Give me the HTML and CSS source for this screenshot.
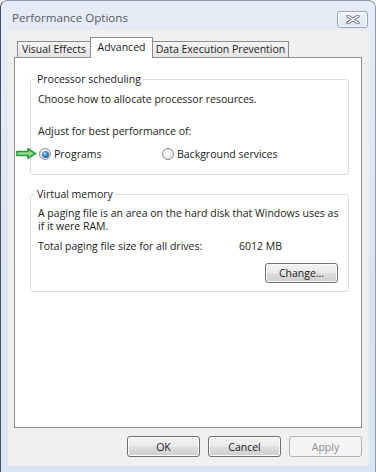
FILE: index.html
```html
<!DOCTYPE html>
<html>
<head>
<meta charset="utf-8">
<link rel="stylesheet" href="styles.css">
</head>
<body>
<div class="window">
  <div class="titlebar">
    <span class="title">Performance Options</span>
    <div class="close">
      <svg width="14" height="9" viewBox="0 0 14 9">
        <path d="M2 1.2 L12 7.8 M12 1.2 L2 7.8" stroke="#5a6473" stroke-width="3.2" stroke-linecap="round" fill="none"/>
        <path d="M2 1.2 L12 7.8 M12 1.2 L2 7.8" stroke="#ffffff" stroke-width="1.6" stroke-linecap="round" fill="none"/>
      </svg>
    </div>
  </div>
  <div class="client">
    <div class="tabs">
      <div class="tab tab-first">Visual Effects</div>
      <div class="tab tab-active">Advanced</div>
      <div class="tab tab-last">Data Execution Prevention</div>
    </div>
    <div class="panel">
      <fieldset class="group group-proc">
        <legend>Processor scheduling</legend>
        <p class="choose">Choose how to allocate processor resources.</p>
        <p class="adjust">Adjust for best performance of:</p>
        <div class="radio-row">
          <svg class="arrow" width="21" height="11" viewBox="0 0 21 11">
            <path d="M1 3.5 H12 V0.8 L19.5 5.5 L12 10.2 V7.5 H1 Z" fill="#8fdc8a" stroke="#1f9e3c" stroke-width="1.6" stroke-linejoin="miter"/>
          </svg>
          <label class="opt opt-first"><span class="radio checked"></span>Programs</label>
          <label class="opt"><span class="radio"></span>Background services</label>
        </div>
      </fieldset>
      <fieldset class="group group-vm">
        <legend>Virtual memory</legend>
        <p class="paging">A paging file is an area on the hard disk that Windows uses as<br>if it were RAM.</p>
        <div class="total"><span class="total-label">Total paging file size for all drives:</span><span>6012 MB</span></div>
        <div class="change-row"><button class="btn">Change...</button></div>
      </fieldset>
    </div>
    <div class="buttons">
      <button class="btn">OK</button>
      <button class="btn">Cancel</button>
      <button class="btn btn-disabled">Apply</button>
    </div>
  </div>
</div>
</body>
</html>
```
FILE: styles.css
```css
* { box-sizing: border-box; }
body {
  margin: 0;
  background: #ffffff;
  font-family: "Open Sans", "Noto Sans", sans-serif;
  font-size: 10.5px;
  color: #1a1a1a;
}
.window {
  width: 376px;
  height: 472px;
  background: linear-gradient(#e6ecf5, #d9e4f1 60%, #d8e5f3);
  border: 1px solid #8f9aab;
  border-left-color: #474d66;
  border-bottom: none;
  border-radius: 7px 7px 0 0;
  padding: 0 6px 6px 7px;
  display: flex;
  flex-direction: column;
}
.titlebar {
  height: 29px;
  display: flex;
  justify-content: space-between;
  align-items: flex-start;
  padding: 9px 1px 0 4px;
}
.title {
  font-size: 11.6px;
  line-height: 16px;
  color: #555b66;
}
.close {
  width: 31px;
  height: 17px;
  margin-top: 1px;
  border: 1px solid #9aa6b8;
  border-radius: 3px;
  background: linear-gradient(#eef2f8, #dde5ef);
  box-shadow: inset 0 0 0 1px rgba(255,255,255,0.6);
  display: flex;
  align-items: center;
  justify-content: center;
}
.client {
  flex: 1;
  background: #f0f0f0;
  display: flex;
  flex-direction: column;
  padding: 7px 7px 9px 6px;
}
.tabs {
  height: 20px;
  display: flex;
  align-items: flex-end;
  padding-left: 3px;
}
.tab {
  height: 16px;
  line-height: 15px;
  border: 1px solid #898c95;
  border-bottom: none;
  background: linear-gradient(#f4f4f4, #e4e4e4);
  text-align: center;
  white-space: nowrap;
}
.tab-first { width: 73px; border-right: none; }
.tab-last { width: 136px; border-left: none; }
.tab-active {
  width: 63px;
  height: 21px;
  line-height: 18px;
  padding-bottom: 2px;
  margin-bottom: -1px;
  background: #ffffff;
  position: relative;
  z-index: 1;
}
.panel {
  flex: 1;
  background: #ffffff;
  border: 1px solid #898c95;
  padding: 14px 12px 0 15px;
}
.group {
  margin: 0;
  min-width: 0;
  border: 1px solid #d5dfe5;
  border-radius: 3px;
  padding: 0 7px 13px 7px;
}
.group legend {
  padding: 0 2px;
  margin-left: -3px;
  line-height: 14px;
}
.group p { margin: 0; }
.choose { margin-top: 6px !important; line-height: 14px; }
.adjust { margin-top: 18px !important; line-height: 14px; }
.radio-row {
  margin-top: 9px;
  height: 14px;
  display: flex;
  align-items: center;
  position: relative;
}
.arrow {
  position: absolute;
  left: -22px;
  top: 1px;
}
.opt {
  display: flex;
  align-items: center;
  line-height: 14px;
}
.opt-first { width: 123px; }
.radio {
  width: 12px;
  height: 12px;
  margin: 0 3px 0 1px;
  border-radius: 50%;
  border: 1px solid #8e8f8f;
  background: radial-gradient(circle at 45% 40%, #ffffff 0%, #f0f0f0 45%, #d2d2d2 100%);
  display: flex;
  align-items: center;
  justify-content: center;
}
.radio.checked::after {
  content: "";
  width: 7px;
  height: 7px;
  border-radius: 50%;
  background: radial-gradient(circle at 40% 35%, #a9dcff 0%, #3f86d2 40%, #10407a 100%);
}
.group-vm { margin-top: 12px; padding-bottom: 8px; }
.paging { margin-top: 6px !important; line-height: 13px; }
.total {
  margin-top: 6px;
  line-height: 14px;
  display: flex;
}
.total-label { width: 201px; }
.change-row {
  margin-top: 10px;
  display: flex;
  justify-content: flex-end;
  padding-right: 3px;
}
.btn {
  width: 73px;
  height: 20px;
  padding: 0;
  font-family: inherit;
  font-size: 10.5px;
  color: #1a1a1a;
  border: 1px solid #707070;
  border-radius: 3px;
  background: linear-gradient(#f2f2f2 0%, #ebebeb 48%, #dddddd 52%, #cfcfcf 100%);
  box-shadow: inset 0 0 0 1px #fbfbfb;
}
.buttons {
  margin-top: 8px;
  display: flex;
  justify-content: flex-end;
  gap: 8px;
}
.buttons .btn { height: 21px; }
.btn-disabled {
  color: #8d8d8d;
  border-color: #adb2b5;
  background: #f4f4f4;
  box-shadow: none;
}
```
